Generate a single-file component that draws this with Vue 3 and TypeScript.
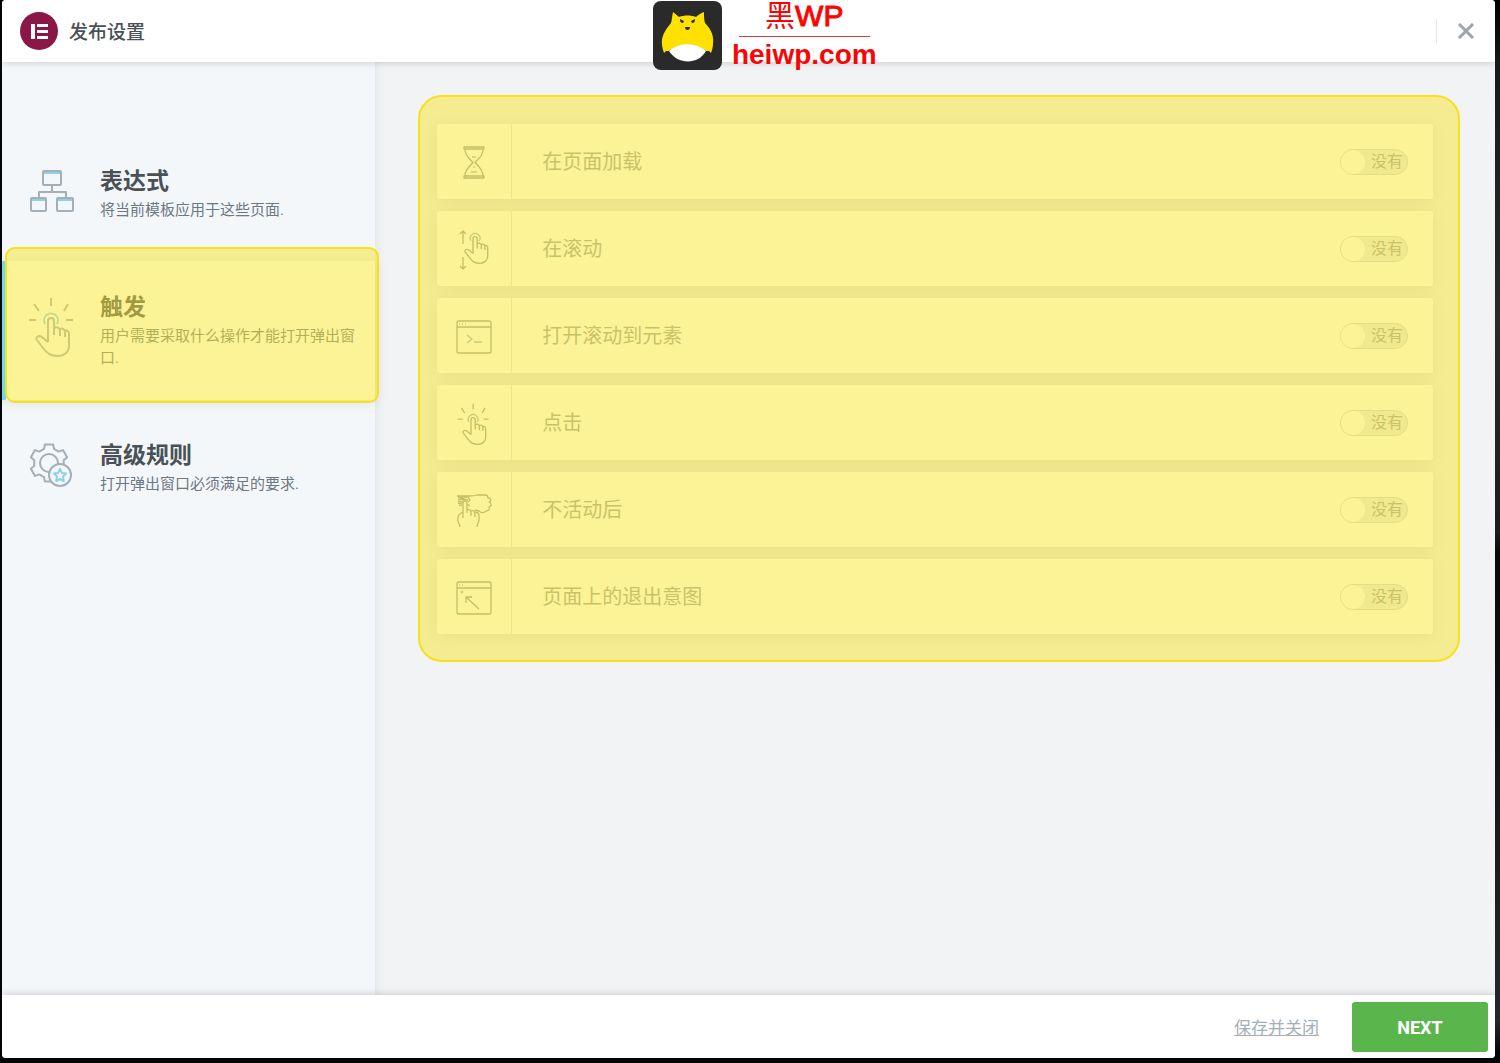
<script setup lang="ts">
import { ref } from 'vue'

interface Stroke {
  d: string
  kind?: 'accent' | 'solid'
  transform?: string
}

interface Step {
  id: string
  title: string
  text: string
  height: number
  strokes: Stroke[]
}

interface Trigger {
  id: string
  label: string
  enabled: boolean
  strokes: Stroke[]
}

const handPath =
  'M20 45V24a3 3 0 0 1 6 0v14M26 31c3-2 6 0 6 3v5M32 32c2-1 5 0 5 3v5M37 34c2-1 4 0 4 3v12c0 6-5 10-11 10-8 0-11-3-15-8l-6-8c-2-3 2-5 5-3l6 5'
const raysPath = 'M23 1v8M6 7l5 7M40 7l-4 7M1 23h7M38 23h7'
const arcPath = 'M17 27a7 7 0 1 1 12 0'
const windowPath = 'M5 7h30a2 2 0 0 1 2 2v28a2 2 0 0 1-2 2h-30a2 2 0 0 1-2-2v-28a2 2 0 0 1 2-2zM3 13h34'

function gearPath(cx: number, cy: number, outer: number, inner: number, teeth: number): string {
  const points: string[] = []
  for (let i = 0; i < teeth; i++) {
    const middle = (i * 2 * Math.PI) / teeth - Math.PI / 2
    const corners: [number, number][] = [
      [-0.34, inner],
      [-0.22, outer],
      [0.22, outer],
      [0.34, inner],
    ]
    for (const [offset, radius] of corners) {
      const x = cx + radius * Math.cos(middle + offset)
      const y = cy + radius * Math.sin(middle + offset)
      points.push(`${x.toFixed(1)} ${y.toFixed(1)}`)
    }
  }
  return `M${points.join('L')}z`
}

const steps: Step[] = [
  {
    id: 'conditions',
    title: '表达式',
    text: '将当前模板应用于这些页面.',
    height: 46,
    strokes: [
      { d: 'M16 3h16a1 1 0 0 1 1 1v12a1 1 0 0 1-1 1h-16a1 1 0 0 1-1-1v-12a1 1 0 0 1 1-1zM4 30h13a1 1 0 0 1 1 1v11a1 1 0 0 1-1 1h-13a1 1 0 0 1-1-1v-11a1 1 0 0 1 1-1zM30 30h14a1 1 0 0 1 1 1v11a1 1 0 0 1-1 1h-14a1 1 0 0 1-1-1v-11a1 1 0 0 1 1-1zM24 17v6M11 30v-6h27v6' },
      { d: 'M16 5h16M4 32h13M30 32h14', kind: 'accent' },
    ],
  },
  {
    id: 'triggers',
    title: '触发',
    text: '用户需要采取什么操作才能打开弹出窗口.',
    height: 62,
    strokes: [{ d: handPath }, { d: raysPath }, { d: arcPath, kind: 'accent' }],
  },
  {
    id: 'rules',
    title: '高级规则',
    text: '打开弹出窗口必须满足的要求.',
    height: 46,
    strokes: [
      { d: gearPath(21, 21, 19, 15, 6) },
      { d: 'M12 21a9 9 0 1 0 18 0a9 9 0 1 0-18 0' },
      { d: 'M21 33a11 11 0 1 0 22 0a11 11 0 1 0-22 0', kind: 'solid' },
      { d: 'M32 27l2 4 4 .5-3 3 .8 4.500-3.800-2-3.800 2 .8-4.500-3-3 4-.5z', kind: 'accent' },
    ],
  },
]

const active = ref('triggers')

const triggers = ref<Trigger[]>([
  {
    id: 'load',
    label: '在页面加载',
    enabled: false,
    strokes: [
      { d: 'M10 7h20v2h-20zM10 36h20v2h-20z' },
      { d: 'M11 10c0 6 5 9 8 12.500-3 3.500-8 7-8 13M29 10c0 6-5 9-8 12.500 3 3.500 8 7 8 13' },
      { d: 'M18 17h4M20 26v2M17 32h6', kind: 'accent' },
    ],
  },
  {
    id: 'scroll',
    label: '在滚动',
    enabled: false,
    strokes: [
      { d: 'M9 17v-13M6 7l3-3 3 3M9 30v12M6 39l3 3 3-3' },
      { d: handPath, transform: 'translate(5 -5) scale(.7)' },
      { d: arcPath, kind: 'accent', transform: 'translate(5 -5) scale(.7)' },
    ],
  },
  {
    id: 'element',
    label: '打开滚动到元素',
    enabled: false,
    strokes: [
      { d: windowPath },
      { d: 'M5 10h1M8 10h1M11 10h1M13 21l5 4-5 4M20 28h8', kind: 'accent' },
    ],
  },
  {
    id: 'click',
    label: '点击',
    enabled: false,
    strokes: [
      { d: handPath, transform: 'translate(3 2) scale(.7)' },
      { d: raysPath, transform: 'translate(3 2) scale(.7)' },
      { d: arcPath, kind: 'accent', transform: 'translate(3 2) scale(.7)' },
    ],
  },
  {
    id: 'inactivity',
    label: '不活动后',
    enabled: false,
    strokes: [
      { d: 'M9 30V15a2 2 0 0 1 4 0v10M13 22c3-1 4 0 4 3v3M17 23c3-1 4 0 4 3v3M21 24c3 0 4 1 4 4v4c0 2-2 4-2 7M9 24c-4 2-6 5-5 9 0 2 2 3 2 6' },
      { d: 'M3 8h12c3 0 5 0 8-1h8c2 0 3 1 3 3 3 0 4 3 1 4 3 1 3 4 0 5 1 3-1 4-3 4-2 2-5 2-7 0l-4-1' },
      { d: 'M4 9h10l2 3-2 2M4 11l8 1M4 13l5 1M4 15l4 1M5 17l3 1M13 16l3 2M6 10l8 2' },
    ],
  },
  {
    id: 'exit',
    label: '页面上的退出意图',
    enabled: false,
    strokes: [
      { d: windowPath },
      { d: 'M12 22l13 12M12 28v-6h6' },
      { d: 'M5 10h1M8 10h1M7 16l2 2M9 16l-2 2', kind: 'accent' },
    ],
  },
])
</script>

<template>
  <div class="page">
    <div class="modal" role="dialog" aria-labelledby="modal-title">
      <header class="header">
        <svg class="brand" viewBox="0 0 38 38" aria-hidden="true">
          <circle cx="19" cy="19" r="19" fill="#8a1745" />
          <path d="M11 12h4v15h-4zM17 12h11v3h-11zM17 18h11v3h-11zM17 24h11v3h-11z" fill="#fff" />
        </svg>
        <h1 id="modal-title" class="heading">发布设置</h1>
        <button class="close" type="button" aria-label="关闭">
          <svg viewBox="0 0 16 16" aria-hidden="true">
            <path d="M1 1l14 14M15 1l-14 14" fill="none" stroke="#9da5ae" stroke-width="3" />
          </svg>
        </button>
      </header>

      <div class="watermark">
        <svg class="cat" viewBox="0 0 69 69" aria-hidden="true">
          <rect width="69" height="69" rx="8" fill="#2a2a2a" />
          <path
            d="M20 11c2 2 4 3 6 5 5-2 12-2 17 0 2-2 5-4 8-5 0 4 0 8 1 11 7 7 9 14 8 21 0 3-1 6-2 9l-2-2h-3c-9-8-28-8-37 0h-3l-2 2c-1-3-2-6-2-9-1-7 3-14 9-21 1-3 1-7 2-11z"
            fill="#ffe100"
          />
          <path d="M16 50c9-9 28-9 37 0-8 14-28 14-37 0z" fill="#fff" />
          <path d="M27 18l4 2-1 2c-2 0-3-1-3-4zM42 18l-4 2 1 2c2 0 3-1 3-4zM32 26h5c0 4-5 4-5 0z" fill="#2a2a2a" />
        </svg>
        <div class="site">
          <span class="site-name">黑<span class="latin">WP</span></span>
          <span class="site-url">heiwp.com</span>
        </div>
      </div>

      <div class="body">
        <nav class="sidebar">
          <button
            v-for="step in steps"
            :key="step.id"
            type="button"
            class="step"
            :class="{ active: step.id === active }"
            @click="active = step.id"
          >
            <svg class="step-icon icon" :viewBox="`0 0 46 ${step.height}`" aria-hidden="true">
              <path v-for="(s, i) in step.strokes" :key="i" :d="s.d" :class="s.kind" />
            </svg>
            <span class="step-copy">
              <span class="step-title">{{ step.title }}</span>
              <span class="step-text">{{ step.text }}</span>
            </span>
          </button>
        </nav>

        <main class="content">
          <ul class="triggers">
            <li v-for="t in triggers" :key="t.id" class="trigger">
              <span class="trigger-icon">
                <svg class="icon" viewBox="0 0 40 44" aria-hidden="true">
                  <path
                    v-for="(s, i) in t.strokes"
                    :key="i"
                    :d="s.d"
                    :class="[s.kind, { scaled: s.transform }]"
                    :transform="s.transform"
                  />
                </svg>
              </span>
              <span class="trigger-label">{{ t.label }}</span>
              <label class="toggle">
                <input v-model="t.enabled" type="checkbox" role="switch" :aria-label="t.label" />
                <span>没有</span>
              </label>
            </li>
          </ul>
        </main>
      </div>

      <footer class="footer">
        <a class="save" href="#">保存并关闭</a>
        <button class="next" type="button">NEXT</button>
      </footer>
    </div>
  </div>
</template>

<style>
body {
  margin: 0;
  background: #050507;
}
</style>

<style scoped>
.page {
  box-sizing: border-box;
  display: flex;
  min-height: 100vh;
  padding: 0 5px 5px 2px;
  background: linear-gradient(#000, #17191c 6%, #2a2a2c 30%, #1c1c20 50%, #08080a 52%, #26262e 96%, #050507 99%);
  font-family: Roboto, 'Noto Sans CJK SC', sans-serif;
}

.modal {
  position: relative;
  display: flex;
  flex: 1;
  flex-direction: column;
  overflow: hidden;
  border-radius: 4px;
  background: #fff;
  box-shadow: 0 5px 0 #050507, -2px 0 0 #050507;
}

.header {
  position: relative;
  z-index: 1;
  display: flex;
  align-items: center;
  height: 62px;
  padding: 0 20px 0 18px;
  background: #fff;
  box-shadow: 0 0 8px rgba(0, 0, 0, 0.2);
}

.brand {
  width: 38px;
  height: 38px;
}

.heading {
  flex: 1;
  margin: 0;
  padding: 3px 0 0 11px;
  color: #495157;
  font-size: 19px;
  font-weight: 500;
  line-height: 28px;
}

.close {
  display: flex;
  align-items: center;
  height: 24px;
  padding: 0 0 0 20px;
  border: 0;
  border-left: 1px solid #e6e9ec;
  background: none;
}

.close svg {
  width: 18px;
  height: 16px;
}

.watermark {
  position: absolute;
  z-index: 2;
  top: 1px;
  left: 43.6%;
  display: flex;
  gap: 10px;
  color: #fa0505;
  font-family: 'Liberation Sans', 'Noto Sans CJK SC', sans-serif;
}

.cat {
  width: 69px;
  height: 69px;
}

.site {
  display: flex;
  flex-direction: column;
  align-items: center;
}

.site-name {
  width: 131px;
  height: 35px;
  border-bottom: 1px solid #d83a3a;
  font-size: 30px;
  line-height: 30px;
  text-align: center;
}

.latin {
  -webkit-text-stroke: 1px #fa0505;
}

.site-url {
  font-size: 28px;
  font-weight: 700;
  line-height: 36px;
}

.body {
  display: flex;
  flex: 1;
}

.sidebar {
  display: flex;
  flex: 0 0 25%;
  flex-direction: column;
  gap: 9px;
  box-sizing: border-box;
  padding-top: 73px;
  background: #f4f7fa;
}

.step {
  position: relative;
  display: flex;
  align-items: center;
  gap: 26px;
  padding: 32px 16px 31px 26px;
  border: 0;
  background: none;
  font-family: inherit;
  text-align: left;
}

.step.active {
  background: #fff;
  box-shadow: inset 4px 0 0 #71d7f7, 0 2px 12px rgba(0, 0, 0, 0.1);
}

.step.active::after {
  content: '';
  position: absolute;
  z-index: 1;
  inset: -14px -4px -3px 3px;
  border: 2px solid #f7e11c;
  border-radius: 10px;
  background: rgba(250, 229, 45, 0.5);
  pointer-events: none;
}

.icon {
  fill: none;
  stroke: #a4afb7;
  stroke-width: 2;
  stroke-linejoin: round;
}

.icon .accent {
  stroke: #8fd0e8;
}

.icon .solid {
  fill: #f4f7fa;
}

.step-icon {
  flex: none;
  width: 46px;
  margin-bottom: 6px;
}

.step-copy {
  display: flex;
  flex-direction: column;
  gap: 2px;
}

.step-title {
  color: #495157;
  font-size: 23px;
  font-weight: 700;
  line-height: 30px;
}

.step-text {
  color: #6d7882;
  font-size: 15px;
  line-height: 22px;
}

.content {
  flex: 1;
  padding: 33px 35px 33px 43px;
  background: #f1f3f5;
  box-shadow: inset 8px 0 12px -8px rgba(0, 0, 0, 0.08);
}

.triggers {
  position: relative;
  display: flex;
  flex-direction: column;
  gap: 12px;
  margin: 0;
  padding: 29px 27px 28px 19px;
  list-style: none;
}

.triggers::after {
  content: '';
  position: absolute;
  inset: 0;
  border: 2px solid #f7e11c;
  border-radius: 24px;
  background: rgba(250, 229, 45, 0.5);
  pointer-events: none;
}

.trigger {
  display: flex;
  align-items: center;
  height: 75px;
  padding-right: 25px;
  border-radius: 3px;
  background: #fff;
  box-shadow: 0 2px 18px rgba(0, 0, 0, 0.1);
}

.trigger-icon {
  display: flex;
  align-items: center;
  justify-content: center;
  width: 74px;
  height: 75px;
  border-right: 1px solid #e0e3e6;
}

.trigger-icon .icon {
  width: 40px;
  height: 44px;
  stroke: #8f989f;
  stroke-width: 1.3;
}

.trigger-icon .scaled {
  stroke-width: 1.9;
}

.trigger-icon .accent {
  stroke: #8fb8c4;
}

.trigger-label {
  flex: 1;
  padding-left: 30px;
  color: #989fa5;
  font-size: 20px;
  line-height: 30px;
}

.toggle {
  display: flex;
  align-items: center;
  box-sizing: border-box;
  width: 68px;
  height: 26px;
  gap: 6px;
  border: 1px solid #d0d5da;
  border-radius: 13px;
  background: #e9ecee;
  color: #989fa5;
  font-size: 16px;
  line-height: 24px;
}

.toggle input {
  flex: none;
  appearance: none;
  width: 24px;
  height: 24px;
  margin: 0;
  border-radius: 50%;
  background: #fff;
}

.footer {
  position: relative;
  display: flex;
  align-items: center;
  justify-content: flex-end;
  gap: 33px;
  height: 63px;
  padding-right: 7px;
  background: #fff;
  box-shadow: 0 0 8px rgba(0, 0, 0, 0.2);
}

.save {
  padding-top: 3px;
  color: #a4afb7;
  font-size: 17px;
  line-height: 24px;
}

.next {
  width: 136px;
  height: 50px;
  padding: 2px 0 0;
  border: 0;
  border-radius: 3px;
  background: #5bb54d;
  color: #fff;
  font-family: inherit;
  font-size: 18px;
  font-weight: 700;
}
</style>
